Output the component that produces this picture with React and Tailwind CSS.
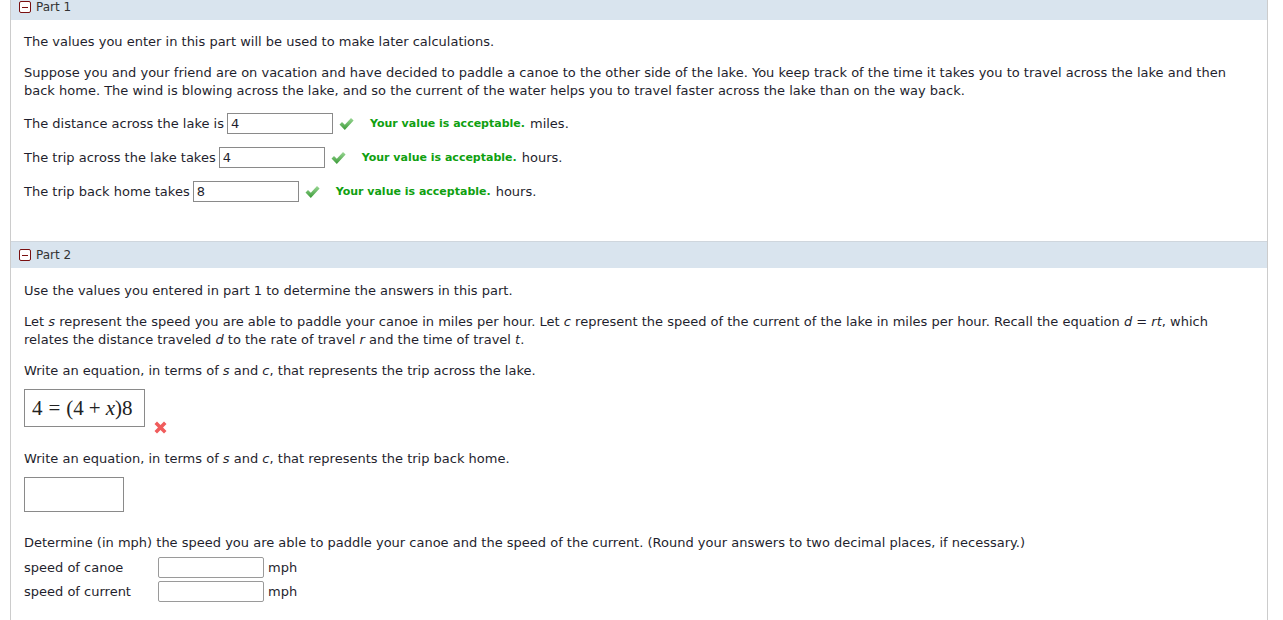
import React from "react";

const font = { fontFamily: '"DejaVu Sans", Verdana, sans-serif' };

function MinusBox() {
  return (
    <span className="inline-flex items-center justify-center w-[12px] h-[12px] border border-[#7a1010] rounded-[2px] bg-white mr-[5px]">
      <span className="block w-[6px] h-[1px] bg-[#7a1010]" />
    </span>
  );
}

function Header({ children }) {
  return (
    <div className="h-[27px] bg-[#d9e4ee] border-t border-[#cfd6dd] flex items-center pl-[8px] text-[12px] text-[#333]">
      <MinusBox />
      <span>{children}</span>
    </div>
  );
}

function Check({ id }) {
  return (
    <svg width="15" height="14" viewBox="0 0 15 14" className="ml-[6px] mr-[6px]">
      <defs>
        <linearGradient id={id} x1="0" y1="0" x2="0" y2="1">
          <stop offset="0" stopColor="#9bd896" />
          <stop offset="1" stopColor="#3a9a36" />
        </linearGradient>
      </defs>
      <path d="M0.5 7.5 L3 5 L5.8 7.8 L12 1 L14.6 3.4 L5.8 13 Z" fill={`url(#${id})`} />
    </svg>
  );
}

function Row({ label, value, unit, id }) {
  return (
    <div className="flex items-center h-[21px]">
      <span>{label}</span>
      <span className="ml-[3px] w-[106px] h-[21px] border border-[#8a8a8a] flex items-center pl-[3px] text-[13px]">{value}</span>
      <Check id={id} />
      <span className="ml-[10px] font-bold text-[#10a010] text-[11px]">Your value is acceptable.</span>
      <span className="ml-[5px]">{unit}</span>
    </div>
  );
}

export default function App() {
  return (
    <div className="bg-white w-[1283px] h-[620px] overflow-hidden text-[13px] text-[#1f1f2e]" style={font}>
      <div className="ml-[10px] w-[1258px] -mt-[7px] border-l border-r border-[#cccccc] h-[632px]">
        <Header>Part 1</Header>
        <div className="px-[13px] pt-[13px] leading-[18px]">
          <p>The values you enter in this part will be used to make later calculations.</p>
          <p className="mt-[13px]">
            Suppose you and your friend are on vacation and have decided to paddle a canoe to the other side of the lake. You keep track of the time it takes you to travel across the lake and then back home. The wind is blowing across the lake, and so the current of the water helps you to travel faster across the lake than on the way back.
          </p>
          <div className="mt-[13px] flex flex-col gap-[13px]">
            <Row id="c1" label="The distance across the lake is" value="4" unit="miles." />
            <Row id="c2" label="The trip across the lake takes" value="4" unit="hours." />
            <Row id="c3" label="The trip back home takes" value="8" unit="hours." />
          </div>
        </div>
        <div className="mt-[39px]">
          <Header>Part 2</Header>
        </div>
        <div className="px-[13px] pt-[14px] leading-[18px]">
          <p>Use the values you entered in part 1 to determine the answers in this part.</p>
          <p className="mt-[13px]">
            Let <i>s</i> represent the speed you are able to paddle your canoe in miles per hour. Let <i>c</i> represent the speed of the current of the lake in miles per hour. Recall the equation <i>d</i> = <i>rt</i>, which relates the distance traveled <i>d</i> to the rate of travel <i>r</i> and the time of travel <i>t</i>.
          </p>
          <p className="mt-[13px]">Write an equation, in terms of <i>s</i> and <i>c</i>, that represents the trip across the lake.</p>
          <div className="mt-[9px] flex items-end">
            <div
              className="w-[121px] h-[38px] border border-[#8a8a8a] flex items-center pl-[7px] text-[21px] text-[#222]"
              style={{ fontFamily: '"Liberation Serif", "Times New Roman", serif' }}
            >
              <span>4</span>
              <span className="mx-[6px]">=</span>
              <span>(4</span>
              <span className="mx-[5px]">+</span>
              <i>x</i>
              <span>)8</span>
            </div>
            <svg width="15" height="15" viewBox="0 0 15 15" className="ml-[8px] -mb-[8px]">
              <path d="M1.5 4 L4 1.5 L7.5 5 L11 1.5 L13.5 4 L10 7.5 L13.5 11 L11 13.5 L7.5 10 L4 13.5 L1.5 11 L5 7.5 Z" fill="#f05c5c" />
            </svg>
          </div>
          <p className="mt-[23px]">Write an equation, in terms of <i>s</i> and <i>c</i>, that represents the trip back home.</p>
          <div className="mt-[9px] w-[100px] h-[35px] border border-[#8a8a8a]" />
          <p className="mt-[22px]">Determine (in mph) the speed you are able to paddle your canoe and the speed of the current. (Round your answers to two decimal places, if necessary.)</p>
          <div className="mt-[5px] flex flex-col gap-[3px]">
            <div className="flex items-center h-[21px]">
              <span className="w-[134px]">speed of canoe</span>
              <span className="w-[106px] h-[21px] border border-[#9a9a9a] rounded-[2px]" />
              <span className="ml-[4px]">mph</span>
            </div>
            <div className="flex items-center h-[21px]">
              <span className="w-[134px]">speed of current</span>
              <span className="w-[106px] h-[21px] border border-[#9a9a9a] rounded-[2px]" />
              <span className="ml-[4px]">mph</span>
            </div>
          </div>
        </div>
      </div>
    </div>
  );
}
